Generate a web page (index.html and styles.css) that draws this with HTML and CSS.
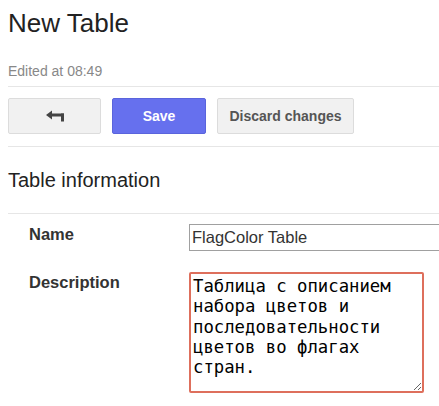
FILE: index.html
```html
<!DOCTYPE html>
<html lang="en">
<head>
<meta charset="utf-8">
<title>New Table</title>
<link rel="stylesheet" href="styles.css">
</head>
<body>
<div class="page">
  <h1 class="title">New Table</h1>
  <div class="edited">Edited at 08:49</div>
  <hr class="sep sep-top">
  <div class="actions">
    <button class="btn btn-back" type="button" aria-label="Back">
      <svg width="18" height="12" viewBox="0 0 18 12" aria-hidden="true">
        <polygon points="0,5 6,0.5 6,9.5" fill="#444"/>
        <rect x="5" y="3.5" width="13" height="3" fill="#444"/>
        <rect x="15" y="3.5" width="3" height="8" fill="#444"/>
      </svg>
    </button>
    <button class="btn btn-primary" type="button">Save</button>
    <button class="btn btn-default" type="button">Discard changes</button>
  </div>
  <hr class="sep sep-actions">
  <h2 class="section-title">Table information</h2>
  <hr class="sep sep-section">
  <div class="form">
    <label class="label" for="name">Name</label>
    <input class="input" id="name" type="text" value="FlagColor Table">
    <label class="label" for="desc">Description</label>
    <textarea class="textarea" id="desc">Таблица с описанием набора цветов и последовательности цветов во флагах стран.</textarea>
  </div>
</div>
</body>
</html>
```

FILE: styles.css
```css
html, body {
  margin: 0;
  padding: 0;
  background: #fff;
  overflow: hidden;
}

.page {
  padding-left: 8px;
  font-family: "Liberation Sans", Arial, sans-serif;
  color: #222;
}

.title {
  margin: 0;
  padding-top: 8px;
  font-size: 26px;
  line-height: 30px;
  font-weight: normal;
  color: #222;
}

.edited {
  margin-top: 25px;
  font-size: 14px;
  line-height: 16px;
  color: #888;
}

.sep {
  border: 0;
  height: 1px;
  background: #e6e6e6;
  margin: 0;
}

.sep-top {
  margin-top: 7px;
}

.actions {
  display: flex;
  gap: 11px;
  margin-top: 11px;
  height: 36px;
}

.btn {
  box-sizing: border-box;
  height: 36px;
  border-radius: 2px;
  font-family: "Liberation Sans", Arial, sans-serif;
  font-size: 14px;
  font-weight: bold;
  padding: 0;
  display: flex;
  align-items: center;
  justify-content: center;
  cursor: pointer;
}

.btn-back {
  width: 93px;
  background: #f1f1f1;
  border: 1px solid #dcdcdc;
}

.btn-primary {
  width: 94px;
  background: #6670ee;
  border: 1px solid #5a64dc;
  color: #fff;
}

.btn-default {
  width: 137px;
  background: #f1f1f1;
  border: 1px solid #dcdcdc;
  color: #555;
}

.sep-actions {
  margin-top: 12px;
}

.section-title {
  margin: 21px 0 0;
  font-size: 20px;
  line-height: 24px;
  font-weight: normal;
  color: #222;
}

.sep-section {
  margin-top: 21px;
}

.form {
  display: grid;
  grid-template-columns: 160px 260px;
  row-gap: 21px;
  padding-top: 10px;
  padding-left: 21px;
  align-items: start;
}

.label {
  font-size: 16.5px;
  line-height: 20px;
  font-weight: bold;
  color: #333;
  padding-top: 0;
}

.input {
  box-sizing: border-box;
  width: 260px;
  height: 27px;
  margin: 0;
  border: 1px solid #a0a0a0;
  border-radius: 0;
  padding: 0 2px;
  font-family: "Liberation Sans", Arial, sans-serif;
  font-size: 16.5px;
  color: #333;
  outline: none;
}

.textarea {
  box-sizing: border-box;
  width: 235px;
  height: 121px;
  margin: 0;
  border: 2px solid #de6f5c;
  border-radius: 2px;
  padding: 2px;
  font-family: "DejaVu Sans Mono", monospace;
  font-size: 17.3px;
  line-height: 20.3px;
  color: #000;
  outline: none;
  overflow: hidden;
}
```
